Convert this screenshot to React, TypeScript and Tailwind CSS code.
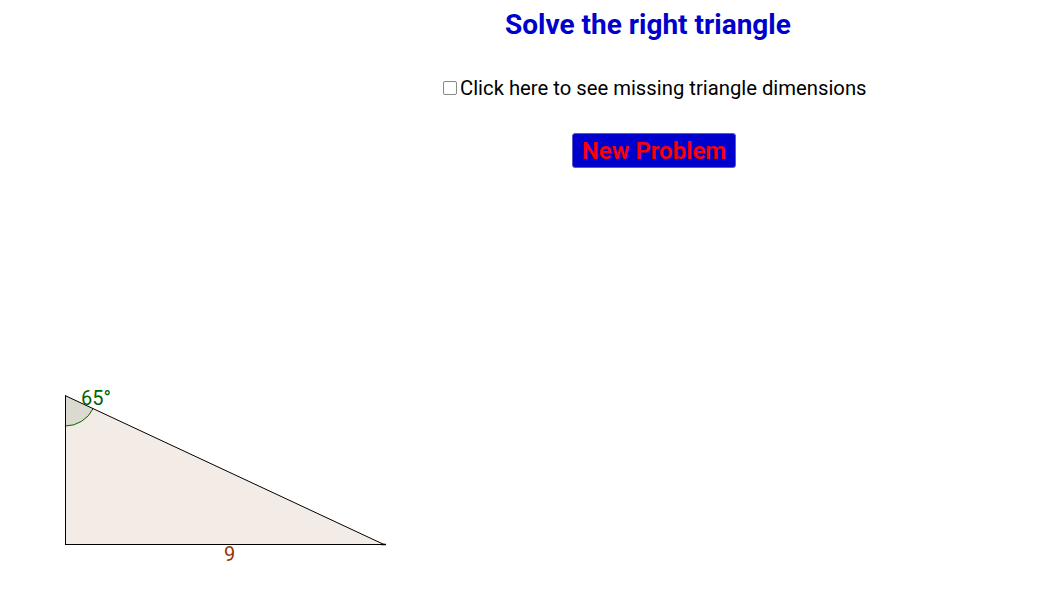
import { useState } from "react";

export default function App() {
  const [showDims, setShowDims] = useState(false);

  return (
    <div
      className="relative w-[1040px] h-[614px] overflow-hidden bg-white"
      style={{ fontFamily: "Roboto, 'Liberation Sans', sans-serif" }}
    >
      {/* triangle drawing */}
      <svg
        className="absolute inset-0 pointer-events-none"
        width="1040"
        height="614"
        viewBox="0 0 1040 614"
      >
        <polygon points="65,395.5 65,544.5 384,544.5" fill="#f3ebe6" />
        <path d="M65,426 A31,31 0 0 0 93.1,408.6 L65,395.5 Z" fill="#dcd9d1" />
        <path d="M65,426 A31,31 0 0 0 93.1,408.6" fill="none" stroke="#006400" strokeWidth="1" />
        <line x1="65.5" y1="395.5" x2="65.5" y2="544.5" stroke="#000" strokeWidth="1" />
        <line x1="65" y1="544.5" x2="384" y2="544.5" stroke="#000" strokeWidth="1" />
        <line x1="65" y1="395.5" x2="384" y2="544.5" stroke="#000" strokeWidth="1" />
        <line x1="381" y1="544.5" x2="386" y2="544.5" stroke="#000" strokeWidth="1.5" />
        <text x="81" y="405" fontSize="20" fill="#006400" fontFamily="Roboto, sans-serif">
          65°
        </text>
        <text x="224" y="561" fontSize="20" fill="#993300" fontFamily="Roboto, sans-serif">
          9
        </text>
      </svg>

      <div className="relative flex flex-col items-start pt-[9px]">
        <h1 className="ml-[505px] text-[28px] leading-[32px] font-bold text-[#0000cc]">
          Solve the right triangle
        </h1>

        <label className="ml-[443px] mt-[35px] flex items-center text-[20.25px] leading-[24px] text-black cursor-pointer">
          <span className="w-[14px] h-[14px] border border-[#888] rounded-[2px] bg-white flex items-center justify-center">
            {showDims && <span className="w-[8px] h-[8px] bg-[#555]" />}
          </span>
          <input
            type="checkbox"
            className="hidden"
            checked={showDims}
            onChange={() => setShowDims(!showDims)}
          />
          <span className="ml-[3px]">Click here to see missing triangle dimensions</span>
        </label>

        <button className="ml-[572px] mt-[33px] w-[164px] h-[35px] rounded-[3px] border border-[#5a5ac8] bg-[#0000cc] text-[#ff0000] text-[24px] leading-[28px] font-semibold flex items-center justify-center">
          New Problem
        </button>
      </div>
    </div>
  );
}
